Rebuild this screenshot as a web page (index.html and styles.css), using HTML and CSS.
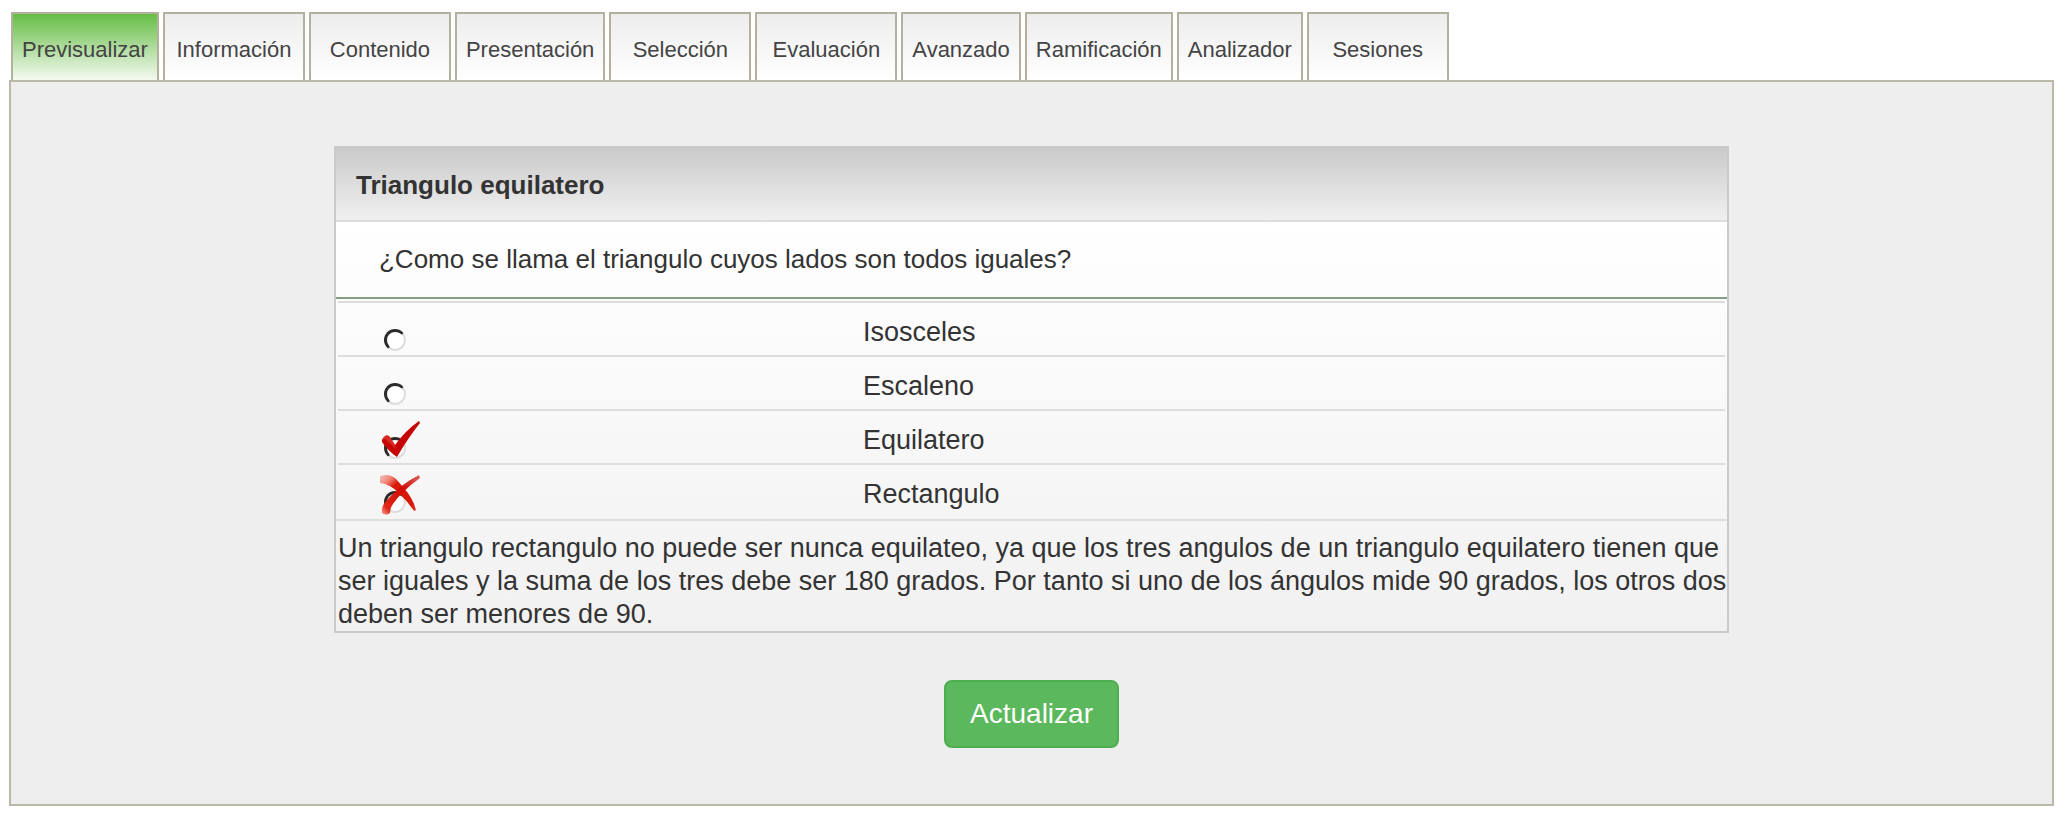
FILE: index.html
```html
<!DOCTYPE html>
<html lang="es">
  <head>
    <meta charset="UTF-8" />
    <meta name="viewport" content="width=device-width, initial-scale=1.0" />
    <title>Previsualizar</title>
    <link rel="stylesheet" href="styles.css">
  </head>
  <body>
    <nav class="tabs">
      <a class="tab active" href="#previsualizar">Previsualizar</a>
      <a class="tab wide" href="#informacion">Información</a>
      <a class="tab wide" href="#contenido">Contenido</a>
      <a class="tab" href="#presentacion">Presentación</a>
      <a class="tab wide" href="#seleccion">Selección</a>
      <a class="tab wide" href="#evaluacion">Evaluación</a>
      <a class="tab" href="#avanzado">Avanzado</a>
      <a class="tab" href="#ramificacion">Ramificación</a>
      <a class="tab" href="#analizador">Analizador</a>
      <a class="tab wide" href="#sesiones">Sesiones</a>
    </nav>

    <main class="panel" id="previsualizar">
      <form class="preview">
        <section class="question">
          <h1 class="question-title">Triangulo equilatero</h1>
          <p class="question-text" id="question-text">¿Como se llama el triangulo cuyos lados son todos iguales?</p>
          <div class="answers" role="radiogroup" aria-labelledby="question-text">
            <div class="answer">
              <span class="mark">
                <input type="radio" name="answer" id="answer-1" />
              </span>
              <label for="answer-1">Isosceles</label>
            </div>
            <div class="answer">
              <span class="mark">
                <input type="radio" name="answer" id="answer-2" />
              </span>
              <label for="answer-2">Escaleno</label>
            </div>
            <div class="answer">
              <span class="mark">
                <input type="radio" name="answer" id="answer-3" />
                <svg class="mark-icon" viewBox="0 0 40 40" aria-hidden="true">
                  <path d="M2 19 Q5 13 9 15 L15 24 Q26 9 39 0 L40 2 Q28 17 17 36 Q8 30 2 21 Z" fill="#c60505" />
                  <path d="M2 19 Q5 13 9 15 L15 24 L16 28 L5 18 Z" fill="#d92a22" />
                </svg>
              </span>
              <label for="answer-3">Equilatero</label>
            </div>
            <div class="answer">
              <span class="mark">
                <input type="radio" name="answer" id="answer-4" />
                <svg class="mark-icon" viewBox="0 0 40 40" aria-hidden="true">
                  <defs>
                    <linearGradient id="stroke-down" x1="0" y1="0" x2="1" y2="1">
                      <stop offset="0" stop-color="#f0c4be" />
                      <stop offset="0.2" stop-color="#f08070" />
                      <stop offset="0.35" stop-color="#d81808" />
                      <stop offset="0.85" stop-color="#d81808" />
                      <stop offset="1" stop-color="#e04030" />
                    </linearGradient>
                    <linearGradient id="stroke-up" x1="0" y1="1" x2="1" y2="0">
                      <stop offset="0" stop-color="#f4a098" />
                      <stop offset="0.15" stop-color="#e02818" />
                      <stop offset="0.6" stop-color="#d00c04" />
                      <stop offset="1" stop-color="#d86860" />
                    </linearGradient>
                  </defs>
                  <path d="M0 1 Q10 -2 16 4 L23 12 Q33 23 36 35 L34 36 Q28 27 19 18 Q10 9 0 8 Z" fill="url(#stroke-down)" />
                  <path d="M2 38 Q1 31 7 25 Q21 9 39 0 L40 3 Q22 16 13 29 Q10 33 10 38 Q6 41 2 38 Z" fill="url(#stroke-up)" />
                </svg>
              </span>
              <label for="answer-4">Rectangulo</label>
            </div>
          </div>
          <p class="feedback">
            Un triangulo rectangulo no puede ser nunca equilateo, ya que los tres angulos de un triangulo
            equilatero tienen que ser iguales y la suma de los tres debe ser 180 grados. Por tanto si uno
            de los ángulos mide 90 grados, los otros dos deben ser menores de 90.
          </p>
        </section>
        <button type="button" class="update-button">Actualizar</button>
      </form>
    </main>
  </body>
</html>
```

FILE: styles.css
```css
* {
  box-sizing: border-box;
}

body {
  font-family: "Liberation Sans", Arial, Helvetica, sans-serif;
  font-size: 26px;
  line-height: 33px;
  color: #333;
  margin: 0;
  padding: 12px 16px 12px 9px;
  background-color: #fff;
}

.tabs {
  display: flex;
  flex-wrap: wrap;
  gap: 4px;
  padding-left: 2px;
}

.tab {
  height: 68px;
  padding: 0 9px;
  border: 2px solid #b3b19d;
  border-bottom: none;
  background: linear-gradient(#ededed, #fff);
  color: #444;
  font-size: 22px;
  line-height: 72px;
  text-align: center;
  text-decoration: none;
}

.tab.wide {
  min-width: 142px;
}

.tab.active {
  background: linear-gradient(#66bd45, #f4faf1);
}

.panel {
  padding: 64px 0 56px;
  border: 2px solid #bab8a8;
  background-color: #eee;
}

.preview {
  display: flex;
  flex-direction: column;
  align-items: center;
  gap: 47px;
}

.question {
  width: 68.35%;
  border: 2px solid #cacaca;
  background: linear-gradient(#fff 15%, #f1f1f1);
}

.question-title {
  margin: 0;
  padding: 21px 20px 18px;
  border-bottom: 2px solid #ddd;
  background: linear-gradient(#cacaca, #f0f0f0);
  font-size: 26px;
  font-weight: bold;
}

.question-text {
  margin: 0;
  padding: 21px 43px;
  border-bottom: 2px solid #869e86;
}

.answers {
  padding: 2px;
  font-size: 27px;
}

.answer {
  display: grid;
  grid-template-columns: 525fr 862fr;
  height: 54px;
  padding-top: 13px;
  border-top: 2px solid #ddd;
}

.mark {
  position: relative;
  padding: 13px 0 0 46px;
}

.mark input {
  appearance: none;
  display: block;
  width: 22px;
  height: 22px;
  margin: 0;
  border: solid;
  border-width: 3px 2px 2px 3px;
  border-color: #2a2a2a #ddd #ddd #2a2a2a;
  border-radius: 50%;
  background-color: #fff;
}

/* result drawn over the radio */
.mark-icon {
  position: absolute;
  top: -3px;
  left: 42px;
  width: 40px;
  height: 40px;
}

.feedback {
  margin: 0;
  padding: 11px 0 0 2px;
  border-top: 2px solid #ddd;
  font-size: 27px;
}

.update-button {
  height: 68px;
  padding: 0 24px;
  border: 2px solid #4cae4c;
  border-radius: 8px;
  background-color: #5cb85c;
  color: #fff;
  font-family: inherit;
  font-size: 28px;
  cursor: pointer;
}

.update-button:hover {
  background-color: #449d44;
}
```
